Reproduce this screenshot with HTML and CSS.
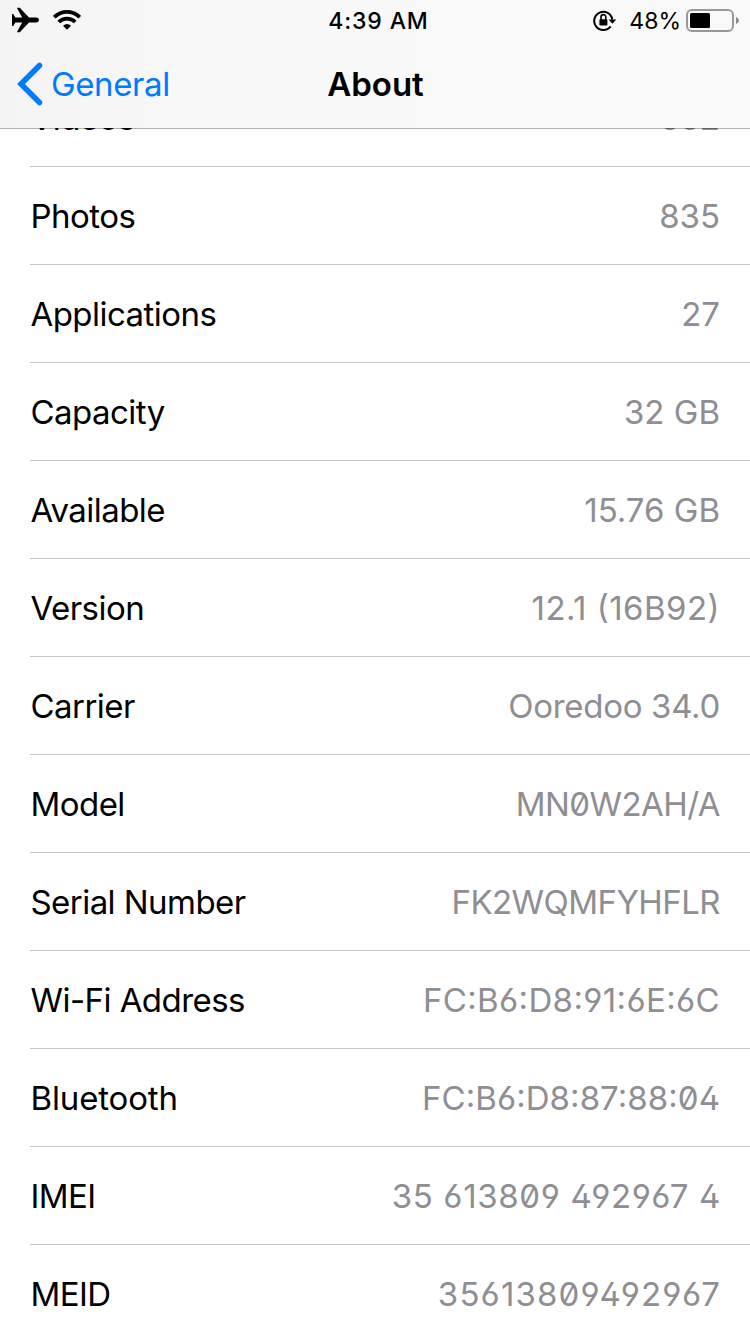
FILE: index.html
```html
<!DOCTYPE html>
<html lang="en">
<head>
  <meta charset="UTF-8" />
  <title>About</title>
  <link rel="stylesheet" href="styles.css">
</head>
<body>
  <header class="header">
    <div class="status-bar">
      <div class="status-left">
        <svg class="plane" width="28" height="26" viewBox="0 0 28 26">
          <path d="M0 7H1.2L3.4 10.4L10.2 10.4L5.2 1.6V0.8H7.8L17 10.6L24.8 10.6Q27 11.1 27 13Q27 14.9 24.8 15.4L17 15.4L7.8 25.2H5.2V24.4L10.2 15.6L3.4 15.6L1.2 19H0Z" />
        </svg>
        <svg class="wifi" width="28" height="20" viewBox="0 0 28 20">
          <path class="arc" d="M1.3 7.2A18 18 0 0 1 26.7 7.2" />
          <path class="arc" d="M5.8 12A11.6 11.6 0 0 1 22.2 12" />
          <path d="M14 19.8L10 15.8Q14 12 18 15.8Z" />
        </svg>
      </div>
      <div class="time">4:39 AM</div>
      <div class="status-right">
        <svg class="lock" width="24" height="22" viewBox="0 0 24 22">
          <path class="ring" d="M19.3 9.5A9.1 9.1 0 1 0 17.6 16.4" />
          <path d="M15.6 9.6H23.2L19.4 13.8Z" />
          <rect x="6.4" y="9.2" width="8" height="6.4" rx="0.8" />
          <path class="shackle" d="M8 10V7A2.4 2.4 0 0 1 12.8 7V10" />
        </svg>
        <span class="percent">48%</span>
        <svg class="battery" width="54" height="24" viewBox="0 0 54 24">
          <rect class="case" x="1" y="1" width="46" height="21" rx="5" />
          <rect x="4" y="4" width="20" height="15" rx="1.5" />
          <path class="tip" d="M50 8Q53 9.4 53 11.5Q53 13.6 50 15Z" />
        </svg>
      </div>
    </div>
    <div class="nav-bar">
      <a class="back" href="#">
        <svg class="chevron" width="26" height="44" viewBox="0 0 26 44">
          <path d="M22.5 3.5L4 22L22.5 40.5" />
        </svg>
        <span>General</span>
      </a>
      <h1>About</h1>
    </div>
  </header>

  <main class="list">
    <div class="row"><span class="label">Videos</span><span class="value">552</span></div>
    <div class="row"><span class="label">Photos</span><span class="value">835</span></div>
    <div class="row"><span class="label">Applications</span><span class="value">27</span></div>
    <div class="row"><span class="label">Capacity</span><span class="value">32 GB</span></div>
    <div class="row"><span class="label">Available</span><span class="value">15.76 GB</span></div>
    <div class="row"><span class="label">Version</span><span class="value version">12.1 (16B92)</span></div>
    <div class="row"><span class="label">Carrier</span><span class="value carrier">Ooredoo 34.0</span></div>
    <div class="row"><span class="label">Model</span><span class="value code">MN0W2AH/A</span></div>
    <div class="row"><span class="label">Serial Number</span><span class="value code">FK2WQMFYHFLR</span></div>
    <div class="row"><span class="label">Wi-Fi Address</span><span class="value code wifi-mac">FC:B6:D8:91:6E:6C</span></div>
    <div class="row"><span class="label wide">Bluetooth</span><span class="value code bt-mac">FC:B6:D8:87:88:04</span></div>
    <div class="row"><span class="label">IMEI</span><span class="value code imei">35 613809 492967 4</span></div>
    <div class="row"><span class="label">MEID</span><span class="value code meid">35613809492967</span></div>
  </main>
</body>
</html>
```
FILE: styles.css
```css
body {
  margin: 0;
  height: 1334px;
  overflow: hidden;
  background: #fff;
  color: #000;
  font-family: Inter, "Liberation Sans", sans-serif;
  font-size: 33px;
}

.header {
  position: relative;
  z-index: 1;
  box-sizing: border-box;
  height: 129px;
  background: linear-gradient(90deg, #f4f4f4, #f8f8f8 25%, #f9f9f9) padding-box;
  border-bottom: 1px solid rgba(0, 0, 0, 0.3);
}

.status-bar {
  display: grid;
  grid-template-columns: 1fr auto 1fr;
  align-items: center;
  height: 40px;
  padding: 0 10px 0 12px;
  font-size: 23px;
}

.status-left,
.status-right {
  display: flex;
  align-items: center;
}

.status-left {
  gap: 13px;
}

.plane {
  margin-top: -1px;
}

.status-right {
  justify-content: flex-end;
}

.time {
  font-weight: 500;
  letter-spacing: 0.85px;
  padding: 2px 0 0 5px;
}

.lock {
  margin-top: 1px;
}

.percent {
  margin: 2px 5px 0 12px;
}

.battery {
  margin-top: 1px;
}

.arc {
  fill: none;
  stroke: #000;
  stroke-width: 3.8;
}

.ring {
  fill: none;
  stroke: #000;
  stroke-width: 2;
}

.shackle {
  fill: none;
  stroke: #000;
  stroke-width: 1.6;
}

.case {
  fill: none;
  stroke: #999;
  stroke-width: 2;
}

.tip {
  fill: #8a8a8a;
}

.nav-bar {
  display: grid;
  grid-template-columns: 1fr auto 1fr;
  align-items: center;
  height: 88px;
  padding: 0 17px;
}

.back {
  display: flex;
  align-items: center;
  gap: 8px;
  color: #007aff;
  text-decoration: none;
  letter-spacing: -0.4px;
}

.chevron path {
  fill: none;
  stroke: #007aff;
  stroke-width: 5.5;
  stroke-linecap: round;
  stroke-linejoin: miter;
}

h1 {
  margin: 0 0 0 1px;
  font-size: 33px;
  font-weight: 600;
}

.list {
  margin-top: -1px;
  padding-left: 30px;
  overflow: hidden;
}

.row {
  display: flex;
  align-items: center;
  justify-content: space-between;
  box-sizing: border-box;
  height: 98px;
  padding-right: 30px;
  border-bottom: 1px solid #c8c7cc;
}

/* scrolled partly under the header */
.row:first-child {
  margin-top: -59px;
}

.label {
  padding-left: 0.5px;
  letter-spacing: -0.55px;
}

.wide {
  letter-spacing: -0.15px;
}

.value {
  color: #8e8e93;
  font-feature-settings: "calt";
}

.version {
  letter-spacing: 0.45px;
}

.carrier {
  letter-spacing: -0.3px;
}

.code {
  letter-spacing: -0.55px;
  font-feature-settings: "calt", "zero", "cv02", "cv03", "cv04";
}

.wifi-mac {
  letter-spacing: 0.35px;
}

.bt-mac {
  letter-spacing: 0.05px;
}

.imei {
  letter-spacing: 0.65px;
  margin-right: -1px;
}

.meid {
  letter-spacing: 1.15px;
  margin-right: -1px;
}
```
